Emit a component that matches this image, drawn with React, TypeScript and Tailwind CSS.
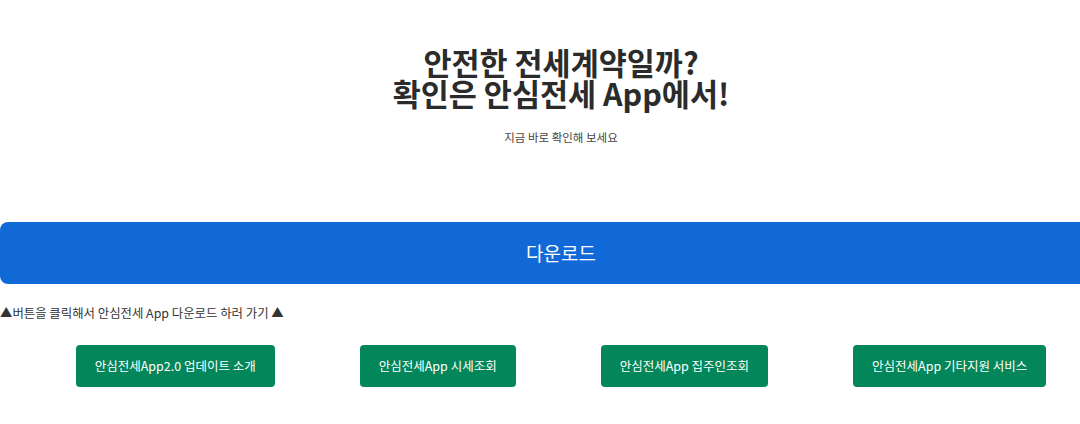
const fontKr = { fontFamily: '"Noto Sans CJK KR", "Noto Sans", sans-serif' }

const links = [
  '안심전세App2.0 업데이트 소개',
  '안심전세App 시세조회',
  '안심전세App 집주인조회',
  '안심전세App 기타지원 서비스',
]

export default function App() {
  return (
    <div className="h-[424px] w-[1080px] overflow-hidden bg-white" style={fontKr}>
      <div className="flex w-[1122px] flex-col">
        {/* Hero heading */}
        <div className="flex flex-col items-center pt-[47px]">
          <h1 className="text-center text-[30.5px] font-bold leading-[31px] text-[#2b2b2b]">
            안전한 전세계약일까?
            <br />
            확인은 안심전세 App에서!
          </h1>
          <p className="mt-[20px] text-[11.5px] text-[#444]">지금 바로 확인해 보세요</p>
        </div>

        {/* Download */}
        <button className="mt-[76px] h-[62px] w-full rounded-[8px] bg-[#1169d8] text-[19px] text-white">
          다운로드
        </button>
        <p className="mt-[19px] text-[12.4px] leading-[20px] text-[#333]">
          ▲버튼을 클릭해서 안심전세 App 다운로드 하러 가기 ▲
        </p>

        {/* Service links */}
        <div className="mt-[22px] flex justify-center gap-[85px]">
          {links.map((label) => (
            <button
              key={label}
              className="h-[42px] rounded-[4px] bg-[#03875a] px-[19px] text-[12.5px] text-white"
            >
              {label}
            </button>
          ))}
        </div>
      </div>
    </div>
  )
}
